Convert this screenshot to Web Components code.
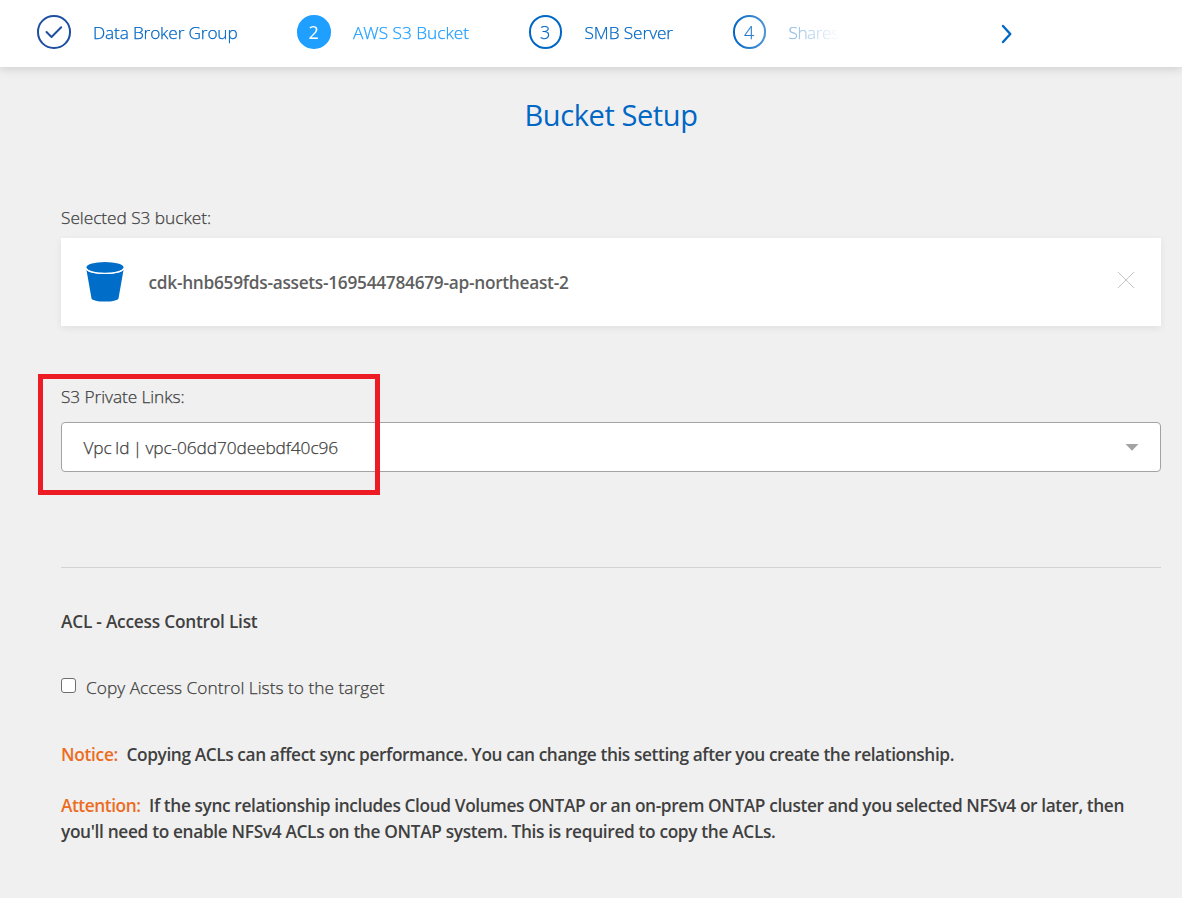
<!DOCTYPE html>
<html lang="en">
<head>
<meta charset="utf-8">
<title>Bucket Setup</title>
<style>
html,body{margin:0;height:100%;background:#f0f0f0}
body{font-family:"Open Sans","Noto Sans",sans-serif;font-size:17.3px;line-height:24px;color:#404040;overflow:hidden}
</style>
</head>
<body>
<bucket-page></bucket-page>
<script>
const define = (name, html, setup) => {
  const template = document.createElement('template');
  template.innerHTML = html;
  customElements.define(name, class extends HTMLElement {
    connectedCallback() {
      if (this.shadowRoot) return;
      this.attachShadow({mode: 'open'}).append(template.content.cloneNode(true));
      if (setup) setup(this, this.shadowRoot);
    }
  });
};

/* One line of text, tracked so that it fills the given width. */
define('fit-text', `<style>
:host{display:block;white-space:nowrap;width:max-content;font-weight:300;-webkit-text-stroke:.25px currentColor}
:host([strong]){font-weight:600;-webkit-text-stroke:0}
span{display:inline-block;white-space:pre}
</style><span><slot></slot></span>`, (el, root) => {
  const span = root.querySelector('span');
  const width = +el.getAttribute('width');
  if (!width) return;
  const gap = (width - span.getBoundingClientRect().width) / el.textContent.length;
  span.style.letterSpacing = gap.toFixed(3) + 'px';
});

define('wizard-step', `<style>
:host{display:flex;align-items:center;gap:22.5px;color:#0067c5;flex:none}
:host([active]){color:#1f9fff}
.dot{box-sizing:border-box;width:33.5px;height:33.5px;border:2px solid currentColor;border-radius:50%;display:flex;align-items:center;justify-content:center}
:host([active]) .dot{background:currentColor}
:host([active]) .dot b{color:#fff}
b{font-weight:400;font-size:18px;position:relative}
:host(:not([active])) b{font-weight:300;-webkit-text-stroke:.25px currentColor}
:host([done]) .dot{border-color:#1e4fa0}
:host([done]) b{display:none}
svg{display:none}
:host([done]) svg{display:block}
.label{padding-top:2px}
</style><div class="dot"><b></b><svg width="18" height="14" viewBox="0 0 18 14" fill="none" stroke="#1e4fa0" stroke-width="2" stroke-linecap="round" stroke-linejoin="round"><path d="M1.5 7L6.5 12L16.2 2.3"/></svg></div><div class="label"><slot></slot></div>`, (el, root) => {
  root.querySelector('b').textContent = el.getAttribute('number') || '';
});

define('wizard-bar', `<style>
:host{display:flex;box-sizing:border-box;height:67px;background:#fff;box-shadow:0 2px 9px rgba(0,0,0,.15);padding:0 0 3px 37px;align-items:center;position:relative}
.steps{display:flex;gap:59.5px;width:803px;overflow:hidden;-webkit-mask-image:linear-gradient(90deg,#000 696px,transparent 803px);mask-image:linear-gradient(90deg,#000 696px,transparent 803px)}
svg{margin-left:160px;margin-top:4px}
</style><div class="steps"><slot></slot></div><svg width="14" height="22" viewBox="0 0 14 22" fill="none" stroke="#0067c5" stroke-width="2.4" stroke-linecap="round" stroke-linejoin="round"><path d="M3 3L10.3 11L3 19"/></svg>`);

define('bucket-card', `<style>
:host{display:flex;align-items:center;box-sizing:border-box;height:88px;background:#fff;box-shadow:0 2px 7px rgba(0,0,0,.07);padding:0 26px 0 25px;color:#5f5f5f}
.name{margin-left:24.5px;padding-top:1px;flex:1}
.x{margin-bottom:4px}
</style><svg width="38" height="40" viewBox="0 0 38 40" fill="#006dc9"><ellipse cx="19" cy="5.5" rx="18.5" ry="5.5"/><path d="M.4 7.6C3 13.5 35 13.5 37.6 7.6L32.5 36.5C31.5 40.6 6.5 40.6 5.5 36.5Z"/><path d="M.3 6.3C2 13 36 13 37.7 6.3" fill="none" stroke="#fff" stroke-width="1.3"/></svg>
<div class="name"><slot></slot></div>
<svg class="x" width="18" height="18" viewBox="0 0 18 18" fill="none" stroke="#c4c4c4" stroke-width="1"><path d="M1 1L17 17M17 1L1 17"/></svg>`);

define('select-box', `<style>
:host{display:flex;align-items:center;justify-content:space-between;box-sizing:border-box;height:50px;background:#fff;border:1px solid #a3a3a3;border-radius:4px;padding:0 21px 0 21.5px}
.v{padding-top:1px;word-spacing:-1px}
</style><div class="v"><slot></slot></div><svg width="14" height="7" viewBox="0 0 14 7" fill="#a3a3a3"><path d="M.5 0H13.5L7 6.8Z"/></svg>`);

define('check-row', `<style>
:host{display:flex;gap:10px}
i{box-sizing:border-box;width:15px;height:15px;border:1px solid #6f6f6f;border-radius:3px;background:#fff;margin-top:2px}
</style><i></i><slot></slot>`);

define('note-line', `<style>
:host{display:flex;gap:8.5px;color:#404040}
.tag{color:#ec6c22}
</style><div class="tag"><slot name="tag"></slot></div><slot></slot>`);

define('bucket-page', `<style>
:host{display:block;height:898px;position:relative}
main{display:flex;flex-direction:column;padding:28px 21px 0 61px}
.title{align-self:center;color:#0067c5;font-size:29px;line-height:40px}
.title fit-text{font-weight:400;-webkit-text-stroke:0}
.label{margin-top:71px}
bucket-card{margin-top:8px}
.label2{margin-top:59px}
select-box{margin-top:13px}
hr{width:100%;height:1px;border:0;background:#d3d3d3;margin:95px 0 42px}
check-row{margin-top:42px}
.notice{margin-top:43px}
.attention{margin-top:26px;line-height:26px}
.mark{position:absolute;left:38px;top:374px;width:342px;height:121px;box-sizing:border-box;border:5px solid #ed1c24}
</style>
<wizard-bar>
<wizard-step done><fit-text width="144.5">Data Broker Group</fit-text></wizard-step>
<wizard-step active number="2"><fit-text width="116">AWS S3 Bucket</fit-text></wizard-step>
<wizard-step number="3"><fit-text width="88.5">SMB Server</fit-text></wizard-step>
<wizard-step number="4"><fit-text width="50">Shares</fit-text></wizard-step>
</wizard-bar>
<main>
<div class="title"><fit-text width="173">Bucket Setup</fit-text></div>
<fit-text class="label" width="150">Selected S3 bucket:</fit-text>
<bucket-card><fit-text strong width="420">cdk-hnb659fds-assets-169544784679-ap-northeast-2</fit-text></bucket-card>
<fit-text class="label2" width="123.5">S3 Private Links:</fit-text>
<select-box><fit-text width="254.5">Vpc Id | vpc-06dd70deebdf40c96</fit-text></select-box>
<hr>
<fit-text strong width="196.5">ACL - Access Control List</fit-text>
<check-row><fit-text width="298.5">Copy Access Control Lists to the target</fit-text></check-row>
<note-line class="notice"><fit-text slot="tag" strong width="57">Notice:</fit-text><fit-text strong width="827.5">Copying ACLs can affect sync performance. You can change this setting after you create the relationship.</fit-text></note-line>
<div class="attention">
<note-line><fit-text slot="tag" strong width="79.5">Attention:</fit-text><fit-text strong width="975">If the sync relationship includes Cloud Volumes ONTAP or an on-prem ONTAP cluster and you selected NFSv4 or later, then</fit-text></note-line>
<fit-text strong width="714.5">you'll need to enable NFSv4 ACLs on the ONTAP system. This is required to copy the ACLs.</fit-text>
</div>
</main>
<div class="mark"></div>`);
</script>
</body>
</html>
